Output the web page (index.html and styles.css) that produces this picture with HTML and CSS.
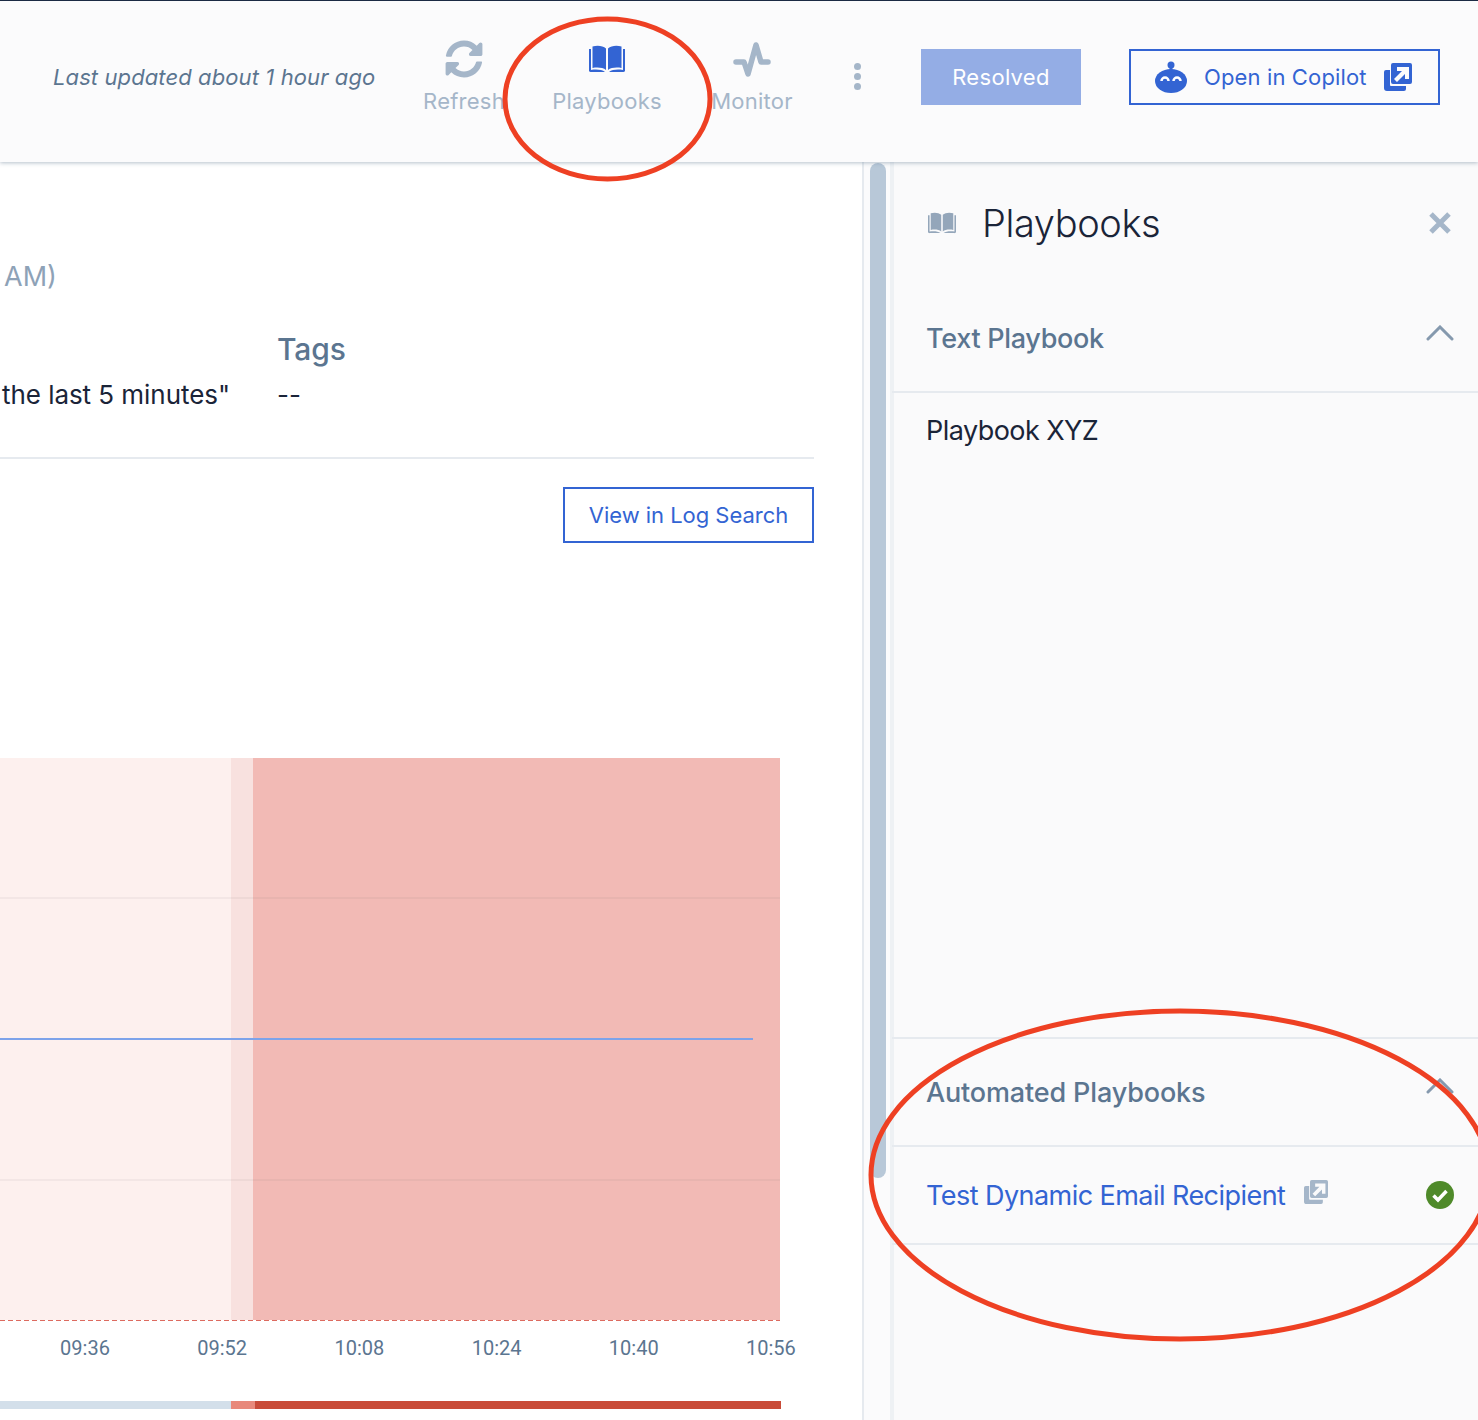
FILE: index.html
```html
<!DOCTYPE html>
<html lang="en">
<head>
    <meta charset="UTF-8">
    <title>Alert - Playbooks</title>
    <link rel="stylesheet" href="styles.css">
</head>
<body>

    <svg width="0" height="0" class="defs">
        <symbol id="book" viewBox="0 0 36 28">
            <path d="M0 4h2v21c5-1 11-.5 14 2H2a2 2 0 0 1-2-1V4zM36 4h-2v21c-5-1-11-.5-14 2h14a2 2 0 0 0 2-1V4z"/>
            <path d="M3.500 1.500C8 0 14 .5 17 3.500V25c-3-2.500-8.500-3-13.500-2zM32.500 1.500C28 0 22 .5 19 3.500V25c3-2.500 8.500-3 13.500-2z"/>
        </symbol>
        <symbol id="external" viewBox="0 0 28 28">
            <path d="M3 7h3v15a1 1 0 0 0 1 1h15v3a2 2 0 0 1-2 2H3a3 3 0 0 1-3-3V9a2 2 0 0 1 2-2z"/>
            <path fill-rule="evenodd" d="M9 0h17a2 2 0 0 1 2 2v17a2 2 0 0 1-2 2H9a2 2 0 0 1-2-2V2a2 2 0 0 1 2-2zM13 4v4h5l-8 8 3 3 8-8v5h4V4z"/>
        </symbol>
    </svg>

    <header class="topbar">
        <span class="updated">Last updated about 1 hour ago</span>
        <div class="tools">
            <div class="tool tool-refresh">
                <svg class="tool-icon" width="38" height="38" viewBox="0 0 512 512"><path d="M370.720 133.280C339.458 104.008 298.888 87.962 255.848 88c-77.458.068-144.328 53.178-162.791 126.850-1.344 5.363-6.122 9.150-11.651 9.150H24.103c-7.498 0-13.194-6.807-11.807-14.176C33.933 94.924 134.813 8 256 8c66.448 0 126.791 26.136 171.315 68.685L463.030 40.970C478.149 25.851 504 36.559 504 57.941V192c0 13.255-10.745 24-24 24H345.941c-21.382 0-32.090-25.851-16.971-40.971l41.750-41.749zM32 296h134.059c21.382 0 32.090 25.851 16.971 40.971l-41.750 41.750c31.262 29.273 71.835 45.319 114.876 45.280 77.418-.070 144.315-53.144 162.787-126.849 1.344-5.363 6.122-9.150 11.651-9.150h57.304c7.498 0 13.194 6.807 11.807 14.176C478.067 417.076 377.187 504 256 504c-66.448 0-126.791-26.136-171.315-68.685L48.970 471.030C33.851 486.149 8 475.441 8 454.059V320c0-13.255 10.745-24 24-24z"/></svg>
                <span>Refresh</span>
            </div>
            <div class="tool tool-playbooks">
                <svg class="tool-icon" width="36" height="28"><use href="#book"/></svg>
                <span>Playbooks</span>
            </div>
            <div class="tool tool-monitor">
                <svg class="tool-icon" width="38" height="38" viewBox="0 0 38 38"><polyline points="3,22 11,22 15,34 23,5 28,22 35,22" fill="none" stroke="currentColor" stroke-width="5.500" stroke-linejoin="round" stroke-linecap="round"/></svg>
                <span>Monitor</span>
            </div>
        </div>
        <div class="kebab"><i></i><i></i><i></i></div>
        <button class="btn-resolved" type="button">Resolved</button>
        <button class="btn-copilot" type="button">
            <svg width="32" height="32" viewBox="0 0 32 32">
                <circle cx="16" cy="4" r="3.500" fill="#3364d3"/>
                <rect x="14.500" y="5" width="3" height="6" fill="#3364d3"/>
                <ellipse cx="16" cy="20" rx="16" ry="12" fill="#3364d3"/>
                <path d="M6.500 20a3.500 3.500 0 0 1 7 0M18.500 20a3.500 3.500 0 0 1 7 0" fill="none" stroke="#fff" stroke-width="2.500"/>
            </svg>
            <span>Open in Copilot</span>
            <svg width="28" height="28"><use href="#external"/></svg>
        </button>
    </header>

    <div class="layout">
        <main class="content">
            <div class="time-note">AM)</div>
            <div class="meta">
                <div class="meta-query">the last 5 minutes"</div>
                <div class="meta-tags">
                    <h3>Tags</h3>
                    <div>--</div>
                </div>
            </div>
            <div class="actions">
                <button class="btn-outline" type="button">View in Log Search</button>
            </div>

            <svg class="plot" width="780" height="564" viewBox="0 0 780 564">
                <rect x="0" y="0" width="231" height="562" fill="#fdf0ee"/>
                <rect x="231" y="0" width="22" height="562" fill="#f8e1df"/>
                <rect x="253" y="0" width="527" height="562" fill="#f2bab5"/>
                <line x1="0" y1="140" x2="780" y2="140" stroke="#5a5a5a" stroke-opacity=".06" stroke-width="2"/>
                <line x1="0" y1="422" x2="780" y2="422" stroke="#5a5a5a" stroke-opacity=".06" stroke-width="2"/>
                <line x1="0" y1="281" x2="753" y2="281" stroke="#7da3ea" stroke-width="2"/>
                <line x1="0" y1="562.500" x2="780" y2="562.500" stroke="#dd6b60" stroke-dasharray="5 3"/>
            </svg>
            <div class="axis">
                <span>09:36</span><span>09:52</span><span>10:08</span><span>10:24</span><span>10:40</span><span>10:56</span>
            </div>
            <div class="timeline">
                <div class="seg-clear"></div>
                <div class="seg-warn"></div>
                <div class="seg-crit"></div>
            </div>
        </main>

        <div class="gutter"><div class="thumb"></div></div>

        <aside class="panel">
            <div class="panel-head">
                <svg class="panel-book" width="28" height="22"><use href="#book"/></svg>
                <h2>Playbooks</h2>
                <svg class="panel-close" width="24" height="24" viewBox="0 0 24 24"><path d="M3 3l18 18M21 3L3 21" fill="none" stroke="#a5b6c9" stroke-width="5"/></svg>
            </div>
            <div class="section-head section-text">
                <span>Text Playbook</span>
                <svg class="chevron" width="28" height="16" viewBox="0 0 28 16"><path d="M2 14L14 2l12 12" fill="none" stroke="#8599ae" stroke-width="3" stroke-linecap="round"/></svg>
            </div>
            <div class="text-body">Playbook XYZ</div>
            <div class="section-head section-auto">
                <span>Automated Playbooks</span>
                <svg class="chevron" width="28" height="16" viewBox="0 0 28 16"><path d="M2 14L14 2l12 12" fill="none" stroke="#8599ae" stroke-width="3" stroke-linecap="round"/></svg>
            </div>
            <div class="auto-row">
                <a href="#">Test Dynamic Email Recipient</a>
                <svg class="auto-ext" width="24" height="24" viewBox="0 0 28 28"><use href="#external"/></svg>
                <svg class="auto-check" width="28" height="28" viewBox="0 0 28 28">
                    <circle cx="14" cy="14" r="14" fill="#4f8a2a"/>
                    <path d="M7.500 14.500l4.500 4.500 8.500-9" fill="none" stroke="#fff" stroke-width="3.500"/>
                </svg>
            </div>
        </aside>
    </div>

    <!-- hand drawn annotation rings -->
    <svg class="marks" width="1478" height="1420" viewBox="0 0 1478 1420">
        <ellipse cx="607.500" cy="99" rx="102.500" ry="80" fill="none" stroke="#ee4023" stroke-width="5"/>
        <ellipse cx="1180" cy="1175" rx="309" ry="164" fill="none" stroke="#ee4023" stroke-width="5"/>
    </svg>

</body>
</html>
```

FILE: styles.css
```css
* {
    box-sizing: border-box;
}

html,
body {
    margin: 0;
    padding: 0;
}

body {
    width: 1478px;
    height: 1420px;
    overflow: hidden;
    position: relative;
    font-family: 'Inter', 'Liberation Sans', sans-serif;
    background-color: #ffffff;
    color: #1a2438;
}

.defs {
    position: absolute;
}

.topbar {
    height: 162px;
    display: flex;
    align-items: center;
    padding: 0 38px 10px 53px;
    border-top: 1px solid #1b2a44;
    background-color: #fbfbfc;
    box-shadow: 0 1px 4px rgba(90, 115, 140, 0.45);
    position: relative;
    z-index: 1;
}

.updated {
    width: 322px;
    font-size: 22px;
    font-style: italic;
    letter-spacing: 0.1px;
    color: #5b7590;
    white-space: nowrap;
}

.tools {
    display: flex;
    margin-left: 49px;
    color: #a5b6c9;
}

.tool {
    width: 144px;
    display: flex;
    flex-direction: column;
    align-items: center;
    font-size: 22px;
    letter-spacing: 0.25px;
}

.tool-refresh {
    width: 80px;
}

.tool-playbooks {
    width: 206px;
}

.tool-monitor {
    width: 84px;
}

.tool-icon {
    height: 38px;
    fill: currentColor;
    margin-bottom: 10px;
}

.tool-playbooks .tool-icon {
    color: #3364d3;
    margin: 5px 0 15px;
    height: 28px;
}

.kebab {
    display: flex;
    flex-direction: column;
    gap: 3px;
    margin-left: 60px;
    margin-right: 60px;
}

.kebab i {
    width: 7px;
    height: 7px;
    border-radius: 50%;
    background-color: #a5b6c9;
}

.btn-resolved {
    width: 160px;
    height: 56px;
    border: 0;
    background-color: #94ade5;
    color: #ffffff;
    font: inherit;
    font-size: 22px;
    letter-spacing: 0.3px;
}

.btn-copilot {
    width: 311px;
    height: 56px;
    margin-left: 48px;
    display: flex;
    align-items: center;
    padding: 0 26px 0 24px;
    border: 2px solid #3364d3;
    background: transparent;
    color: #3364d3;
    fill: #3364d3;
    font: inherit;
    font-size: 22px;
    letter-spacing: 0.13px;
}

.btn-copilot span {
    flex: 1;
    margin-left: 17px;
    text-align: left;
}

.layout {
    height: 1258px;
    display: flex;
}

.content {
    width: 862px;
    padding-right: 48px;
    overflow: hidden;
}

.time-note {
    margin: 100px 0 0 4px;
    font-size: 27px;
    line-height: 30px;
    color: #8ea2b7;
}

.meta {
    display: flex;
    align-items: flex-end;
    height: 92px;
    margin-top: 26px;
    padding-left: 2px;
    font-size: 26px;
    letter-spacing: -0.05px;
    line-height: 30px;
}

.meta-query {
    width: 275px;
    white-space: nowrap;
}

.meta-tags h3 {
    margin: 0 0 13px;
    font-size: 30px;
    line-height: 36px;
    font-weight: 500;
    color: #5b7590;
}

.actions {
    margin-top: 47px;
    padding-top: 28px;
    border-top: 2px solid #e6eaef;
    display: flex;
    justify-content: flex-end;
}

.btn-outline {
    width: 251px;
    height: 56px;
    border: 2px solid #3364d3;
    background: #ffffff;
    color: #3364d3;
    font: inherit;
    font-size: 22px;
    letter-spacing: -0.03px;
}

.plot {
    display: block;
    margin-top: 215px;
}

.axis {
    display: flex;
    gap: 87.2px;
    margin-top: 14px;
    padding-left: 60px;
    font-family: 'Roboto', sans-serif;
    font-size: 20px;
    line-height: 24px;
    color: #5b7590;
    white-space: nowrap;
}

.axis span {
    width: 50px;
    text-align: center;
}

.timeline {
    display: flex;
    width: 781px;
    height: 8px;
    margin-top: 41px;
}

.seg-clear {
    width: 231px;
    background-color: #d3dfea;
}

.seg-warn {
    width: 24px;
    background-color: #e8897b;
}

.seg-crit {
    flex: 1;
    background-color: #c94b38;
}

.gutter {
    width: 30px;
    padding: 1px 6px 0 6px;
    background-color: #fbfbfc;
    border-left: 2px solid #e6eaef;
    border-right: 2px solid #eef1f4;
}

.thumb {
    width: 16px;
    height: 1015px;
    border-radius: 8px;
    background-color: #b8c8d8;
}

.panel {
    flex: 1;
    display: flex;
    flex-direction: column;
    background-color: #fafafb;
    box-shadow: inset 2px 0 0 #eef1f4;
}

.panel-head {
    height: 118px;
    display: flex;
    align-items: center;
    padding: 4px 26px 0 36px;
}

.panel-book {
    fill: #94a6ba;
}

.panel-head h2 {
    flex: 1;
    margin: 0 0 0 26px;
    font-size: 38px;
    font-weight: 300;
    letter-spacing: -0.4px;
}

.section-head {
    display: flex;
    align-items: center;
    justify-content: space-between;
    padding: 0 24px 0 34px;
    border-bottom: 2px solid #e6eaef;
    font-size: 27px;
    font-weight: 500;
    letter-spacing: -0.3px;
    color: #5b7590;
}

.chevron {
    position: relative;
    top: -6px;
}

.section-text {
    height: 113px;
    padding-top: 6px;
}

.text-body {
    height: 644px;
    padding: 20px 34px;
    font-size: 27px;
    line-height: 36px;
    letter-spacing: -0.55px;
}

.section-auto {
    height: 110px;
    border-top: 2px solid #e6eaef;
    letter-spacing: -0.15px;
}

.auto-row {
    height: 98px;
    display: flex;
    align-items: center;
    padding: 0 24px 0 34px;
    border-bottom: 2px solid #e6eaef;
    font-size: 27px;
    letter-spacing: -0.55px;
}

.auto-row a {
    color: #3364d3;
    text-decoration: none;
}

.auto-ext {
    fill: #a5b6c9;
    margin: -6px 0 0 19px;
}

.auto-check {
    margin-left: auto;
}

.marks {
    position: absolute;
    left: 0;
    top: 0;
    pointer-events: none;
    z-index: 2;
}
```
